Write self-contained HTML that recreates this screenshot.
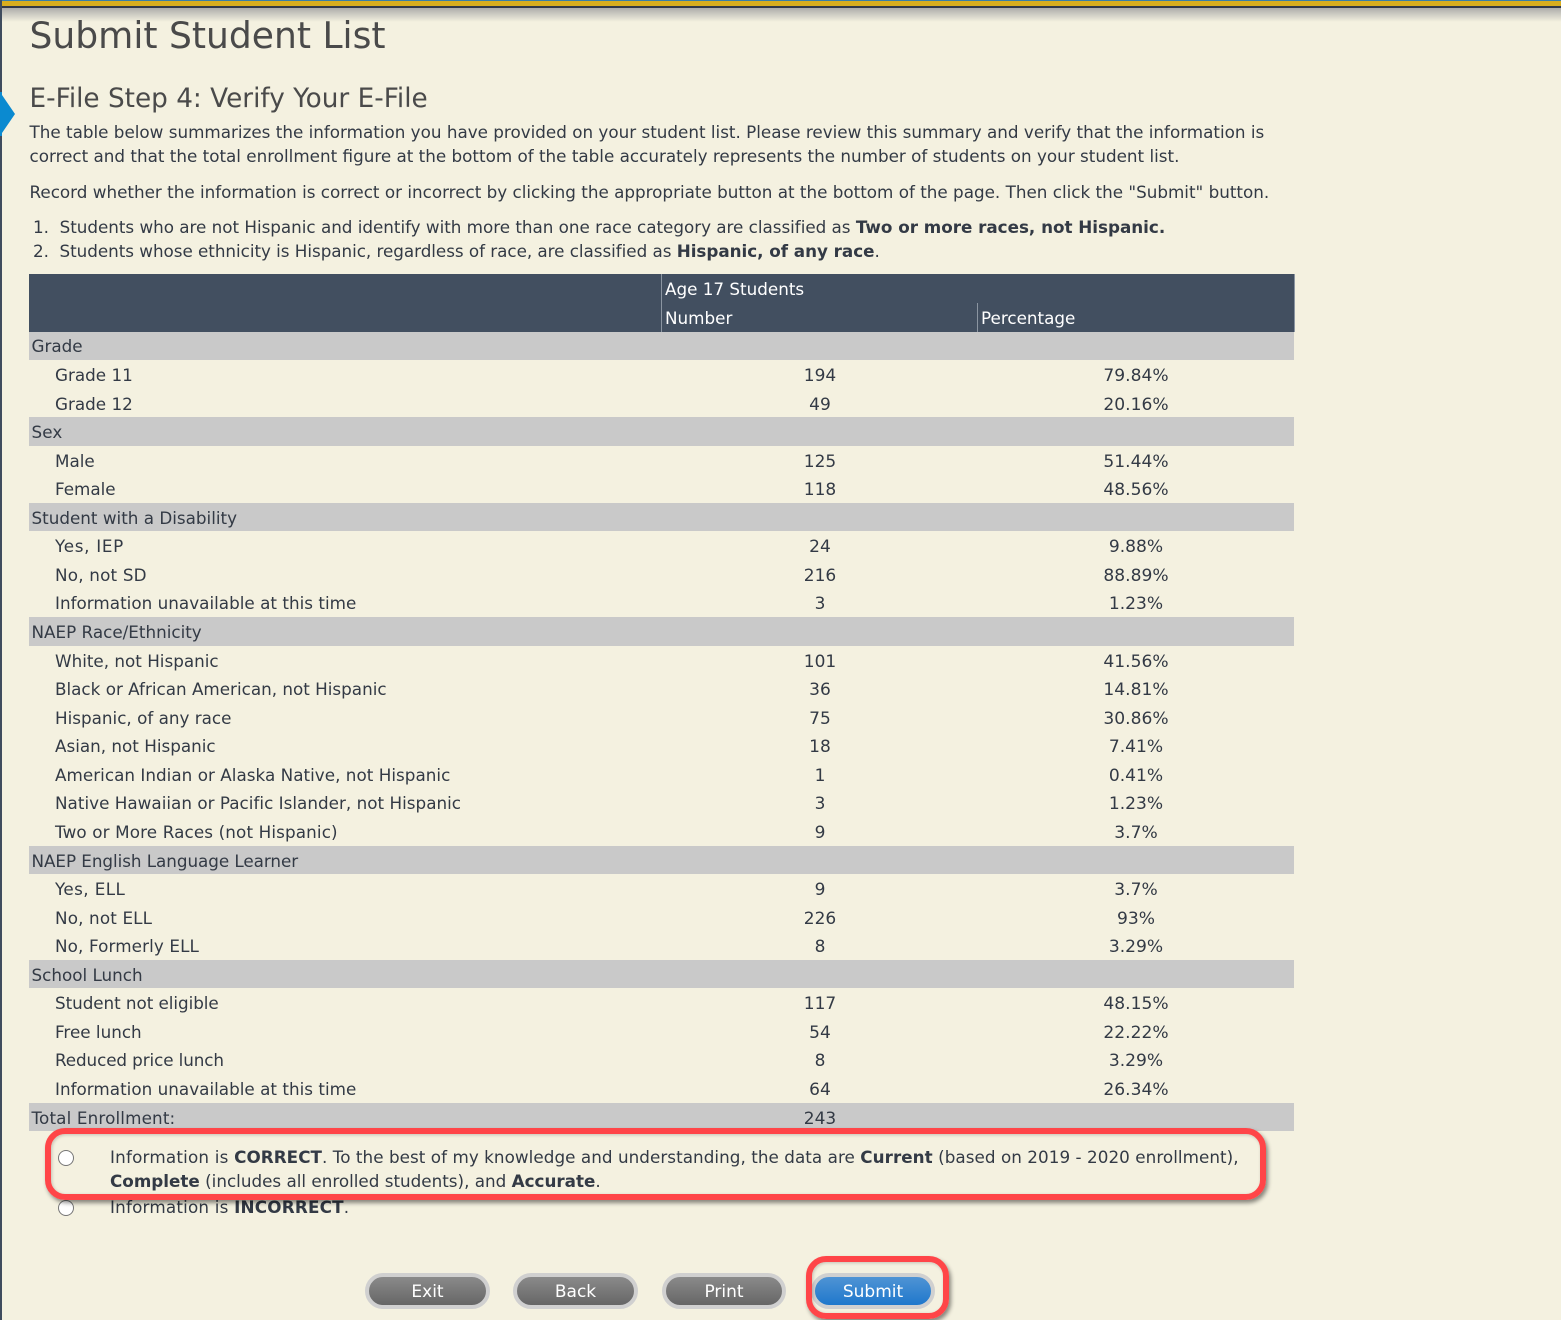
<!DOCTYPE html>
<html><head><meta charset="utf-8"><title>Submit Student List</title>
<style>
html,body{margin:0;padding:0}
body{position:relative;width:1561px;height:1320px;overflow:hidden;background:#f4f1e0;font-family:"DejaVu Sans","Liberation Sans",sans-serif;font-size:16.78px;color:#333a45}
.a{position:absolute;white-space:nowrap}
.t{position:absolute;left:29.5px;white-space:nowrap;line-height:24px;height:24px}
.r{position:absolute;left:29px;width:1265px;height:28px;line-height:30px;white-space:nowrap}
.b{background:#c9c9c9}
.l{position:absolute;left:26px;top:-1px}
.h{position:absolute;left:2.5px;top:-1px}
.n{position:absolute;left:633px;width:316px;text-align:center;font-size:17px}
.p{position:absolute;left:949px;width:316px;text-align:center;font-size:17.1px}
.btn{position:absolute;top:1273px;width:117px;height:28px;line-height:30px;border:4px solid #d0d0d0;border-radius:18px;text-align:center;color:#fff;background:linear-gradient(#8a8a8a,#666);font-size:17px}
.rad{position:absolute;left:58px;width:14px;height:14px;border:1px solid #767676;border-radius:50%;background:#fff}
.red{position:absolute;border:6px solid #ff4548;box-shadow:2px 3px 4px rgba(0,0,0,.45),inset 1px 1px 3px rgba(0,0,0,.2);box-sizing:border-box}
</style></head><body>
<div class="a" style="left:0;top:0;width:1561px;height:1px;background:#3a7fa8"></div>
<div class="a" style="left:0;top:1px;width:1561px;height:5px;background:#d9ae1f"></div>
<div class="a" style="left:0;top:6px;width:1561px;height:2px;background:#333a48"></div>
<div class="a" style="left:0;top:8px;width:1561px;height:14px;background:linear-gradient(#adadab,#f4f1e0)"></div>
<div class="a" style="left:0;top:0;width:2px;height:1320px;background:#3f4c5e"></div>
<svg class="a" style="left:0;top:92px" width="16" height="46"><polygon points="0,0 2,0 2,3 15,22 2,41 2,44 0,44" fill="#0b8ad0"/></svg>

<div class="a" style="left:29.5px;top:13px;font-size:36.1px;line-height:46px;color:#4a4a4a">Submit Student List</div>
<div class="a" style="left:29.5px;top:82px;font-size:26.3px;line-height:34px;color:#4a4a4a">E-File Step 4: Verify Your E-File</div>
<div class="t" style="top:120px">The table below summarizes the information you have provided on your student list. Please review this summary and verify that the information is</div>
<div class="t" style="top:144px">correct and that the total enrollment figure at the bottom of the table accurately represents the number of students on your student list.</div>
<div class="t" style="top:180px">Record whether the information is correct or incorrect by clicking the appropriate button at the bottom of the page. Then click the "Submit" button.</div>
<div class="t" style="top:215px;left:33px;letter-spacing:-.02px">1.&nbsp; Students who are not Hispanic and identify with more than one race category are classified as <b>Two or more races, not Hispanic.</b></div>
<div class="t" style="top:239px;left:33px;letter-spacing:-.035px">2.&nbsp; Students whose ethnicity is Hispanic, regardless of race, are classified as <b>Hispanic, of any race</b>.</div>

<div class="a" style="left:29px;top:274px;width:1266px;height:58px;background:#424f60;color:#fff">
<div class="a" style="left:632px;top:0;width:1px;height:58px;background:#8b95a1"></div>
<div class="a" style="left:948px;top:29px;width:1px;height:29px;background:#8b95a1"></div>
<div class="a" style="left:1265px;top:0;width:1px;height:58px;background:#8b95a1"></div>
<div class="a" style="left:636px;top:1px;line-height:28px">Age 17 Students</div>
<div class="a" style="left:636px;top:30px;line-height:28px">Number</div>
<div class="a" style="left:952px;top:30px;line-height:28px">Percentage</div>
</div>

<div class="r b" style="top:332px"><span class="h">Grade</span></div>
<div class="r" style="top:361px"><span class="l">Grade 11</span><span class="n">194</span><span class="p">79.84%</span></div>
<div class="r" style="top:390px"><span class="l">Grade 12</span><span class="n">49</span><span class="p">20.16%</span></div>
<div class="r b" style="top:417px;height:29px;line-height:31px"><span class="h" style="top:0;letter-spacing:.1px">Sex</span></div>
<div class="r" style="top:447px"><span class="l">Male</span><span class="n">125</span><span class="p">51.44%</span></div>
<div class="r" style="top:475px"><span class="l">Female</span><span class="n">118</span><span class="p">48.56%</span></div>
<div class="r b" style="top:503px;line-height:32px"><span class="h">Student with a Disability</span></div>
<div class="r" style="top:532px"><span class="l" style="letter-spacing:.7px">Yes, IEP</span><span class="n">24</span><span class="p">9.88%</span></div>
<div class="r" style="top:561px"><span class="l" style="letter-spacing:.2px">No, not SD</span><span class="n">216</span><span class="p">88.89%</span></div>
<div class="r" style="top:589px"><span class="l" style="letter-spacing:.02px">Information unavailable at this time</span><span class="n">3</span><span class="p">1.23%</span></div>
<div class="r b" style="top:617px;height:29px;line-height:32px"><span class="h">NAEP Race/Ethnicity</span></div>
<div class="r" style="top:647px"><span class="l">White, not Hispanic</span><span class="n">101</span><span class="p">41.56%</span></div>
<div class="r" style="top:675px"><span class="l">Black or African American, not Hispanic</span><span class="n">36</span><span class="p">14.81%</span></div>
<div class="r" style="top:704px"><span class="l">Hispanic, of any race</span><span class="n">75</span><span class="p">30.86%</span></div>
<div class="r" style="top:732px"><span class="l">Asian, not Hispanic</span><span class="n">18</span><span class="p">7.41%</span></div>
<div class="r" style="top:761px"><span class="l" style="letter-spacing:.03px">American Indian or Alaska Native, not Hispanic</span><span class="n">1</span><span class="p">0.41%</span></div>
<div class="r" style="top:789px"><span class="l" style="letter-spacing:.02px">Native Hawaiian or Pacific Islander, not Hispanic</span><span class="n">3</span><span class="p">1.23%</span></div>
<div class="r" style="top:818px"><span class="l" style="letter-spacing:.13px">Two or More Races (not Hispanic)</span><span class="n">9</span><span class="p">3.7%</span></div>
<div class="r b" style="top:846px;line-height:32px"><span class="h" style="letter-spacing:-.05px">NAEP English Language Learner</span></div>
<div class="r" style="top:875px"><span class="l" style="letter-spacing:.4px">Yes, ELL</span><span class="n">9</span><span class="p">3.7%</span></div>
<div class="r" style="top:904px"><span class="l" style="letter-spacing:.15px">No, not ELL</span><span class="n">226</span><span class="p">93%</span></div>
<div class="r" style="top:932px"><span class="l" style="letter-spacing:.12px">No, Formerly ELL</span><span class="n">8</span><span class="p">3.29%</span></div>
<div class="r b" style="top:960px;line-height:32px"><span class="h">School Lunch</span></div>
<div class="r" style="top:989px"><span class="l" style="letter-spacing:-.05px">Student not eligible</span><span class="n">117</span><span class="p">48.15%</span></div>
<div class="r" style="top:1018px"><span class="l">Free lunch</span><span class="n">54</span><span class="p">22.22%</span></div>
<div class="r" style="top:1046px"><span class="l" style="letter-spacing:-.1px">Reduced price lunch</span><span class="n">8</span><span class="p">3.29%</span></div>
<div class="r" style="top:1075px"><span class="l" style="letter-spacing:.02px">Information unavailable at this time</span><span class="n">64</span><span class="p">26.34%</span></div>
<div class="r b" style="top:1103px;line-height:32px"><span class="h" style="letter-spacing:.15px">Total Enrollment:</span><span class="n">243</span></div>

<div class="rad" style="top:1150px"></div>
<div class="t" style="left:110px;top:1145px;letter-spacing:.05px"><span style="letter-spacing:.2px">Information is </span><b>CORRECT</b>. To the best of my knowledge and understanding, the data are <b>Current</b> (based on 2019 - 2020 enrollment),</div>
<div class="t" style="left:110px;top:1169px"><b>Complete</b> (includes all enrolled students), and <b>Accurate</b>.</div>
<div class="rad" style="top:1200px"></div>
<div class="t" style="left:110px;top:1195px;letter-spacing:.2px">Information is <b>INCORRECT</b>.</div>
<div class="red" style="left:45px;top:1128px;width:1221px;height:72px;border-radius:20px"></div>

<div class="btn" style="left:365px">Exit</div>
<div class="btn" style="left:513px">Back</div>
<div class="btn" style="left:662px;width:116px">Print</div>
<div class="btn" style="left:811px;width:116px;background:linear-gradient(#4f94d4,#1f78cc)">Submit</div>
<div class="red" style="left:806px;top:1256px;width:143px;height:63px;border-radius:20px"></div>
</body></html>
